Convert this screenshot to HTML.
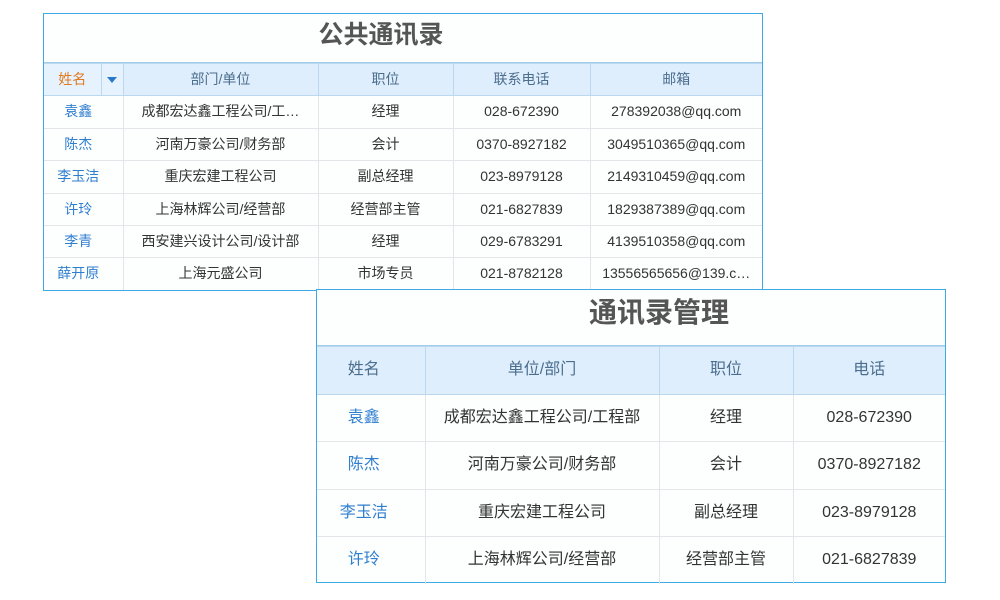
<!DOCTYPE html>
<html><head><meta charset="utf-8"><style>
body{margin:0;width:1000px;height:600px;background:#fff;position:relative;overflow:hidden;font-family:"Liberation Sans","Noto Sans CJK SC",sans-serif}
.box{position:absolute;background:#fdfefe;border:1px solid #3fa9e6;box-sizing:border-box}
.title{text-align:center;font-weight:bold;color:#555;border-bottom:1px solid #9fcdeb}
table{border-collapse:collapse;width:100%;table-layout:fixed}
td,th{text-align:center;border:1px solid #e3e6e9;padding:0;white-space:nowrap;overflow:hidden;text-overflow:ellipsis;color:#333;font-weight:normal;vertical-align:top}
th{background:#dfeefc;color:#4b6e8e;border-color:#bcd8ee}
td.n{color:#2f7fd0}
#t1 td.n{padding-right:10px}
tr td:first-child,tr th:first-child{border-left:none}
tr td:last-child,tr th:last-child{border-right:none}
tr:last-child td{border-bottom:none}
#t1 td,#t1 th{height:31.4px;line-height:30px;font-size:14px}
#t2 td,#t2 th{height:46.5px;line-height:46px;font-size:16px}
#t2 td:first-child,#t2 th:first-child{padding-right:14px}
</style></head><body>
<div class="box" style="left:43px;top:13px;width:720px;height:278px">
<div class="title" style="height:48px;line-height:42px;font-size:25px;padding-right:44px">公共通讯录</div>
<table id="t1"><colgroup><col style="width:57px"><col style="width:22px"><col style="width:195px"><col style="width:135px"><col style="width:137px"><col></colgroup>
<tr><th style="color:#e07a1e;background:#e6f2fd">姓名</th><th style="background:#e6f2fd;border-left-color:#d6e8f7"><span style="display:inline-block;width:0;height:0;border-left:5px solid transparent;border-right:5px solid transparent;border-top:6px solid #2a79c9;vertical-align:middle"></span></th><th>部门/单位</th><th>职位</th><th>联系电话</th><th>邮箱</th></tr>
<tr><td class="n" colspan="2">袁鑫</td><td>成都宏达鑫工程公司/工…</td><td>经理</td><td>028-672390</td><td>278392038@qq.com</td></tr>
<tr><td class="n" colspan="2">陈杰</td><td>河南万豪公司/财务部</td><td>会计</td><td>0370-8927182</td><td>3049510365@qq.com</td></tr>
<tr><td class="n" colspan="2">李玉洁</td><td>重庆宏建工程公司</td><td>副总经理</td><td>023-8979128</td><td>2149310459@qq.com</td></tr>
<tr><td class="n" colspan="2">许玲</td><td>上海林辉公司/经营部</td><td>经营部主管</td><td>021-6827839</td><td>1829387389@qq.com</td></tr>
<tr><td class="n" colspan="2">李青</td><td>西安建兴设计公司/设计部</td><td>经理</td><td>029-6783291</td><td>4139510358@qq.com</td></tr>
<tr><td class="n" colspan="2">薛开原</td><td>上海元盛公司</td><td>市场专员</td><td>021-8782128</td><td>13556565656@139.c…</td></tr>
</table></div>
<div class="box" style="left:316px;top:289px;width:630px;height:294px">
<div class="title" style="height:55px;line-height:46px;font-size:28px;padding-left:56px">通讯录管理</div>
<table id="t2"><colgroup><col style="width:108px"><col style="width:234px"><col style="width:134px"><col></colgroup>
<tr><th>姓名</th><th>单位/部门</th><th>职位</th><th>电话</th></tr>
<tr><td class="n">袁鑫</td><td>成都宏达鑫工程公司/工程部</td><td>经理</td><td>028-672390</td></tr>
<tr><td class="n">陈杰</td><td>河南万豪公司/财务部</td><td>会计</td><td>0370-8927182</td></tr>
<tr><td class="n">李玉洁</td><td>重庆宏建工程公司</td><td>副总经理</td><td>023-8979128</td></tr>
<tr><td class="n">许玲</td><td>上海林辉公司/经营部</td><td>经营部主管</td><td>021-6827839</td></tr>
</table></div>
</body></html>
